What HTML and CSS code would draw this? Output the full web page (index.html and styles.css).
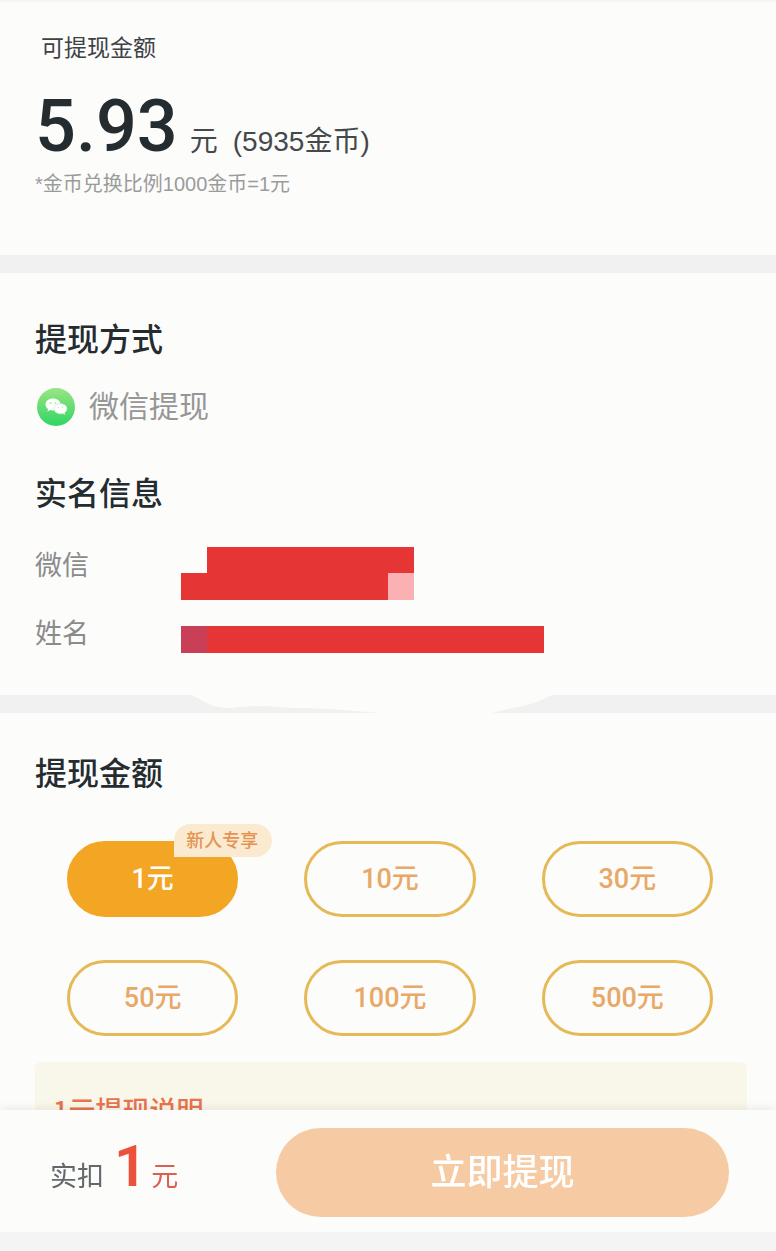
FILE: index.html
```html
<!DOCTYPE html>
<html lang="zh-CN">
<head>
  <meta charset="UTF-8">
  <meta name="viewport" content="width=device-width, initial-scale=1.0">
  <title>提现</title>
  <link rel="stylesheet" href="styles.css">
</head>
<body>
  <div class="app">
    <main class="app-main">
      <section class="balance">
        <h1 class="balance-label">可提现金额</h1>
        <p class="balance-amount">
          <strong>5.93</strong>
          <span class="balance-unit">元</span>
          <span class="balance-coins">(5935金币)</span>
        </p>
        <p class="balance-rate">*金币兑换比例1000金币=1元</p>
      </section>

      <div class="divider"></div>

      <section class="method">
        <h2>提现方式</h2>
        <div class="method-item">
          <svg class="wechat-icon" viewBox="0 0 40 40" aria-hidden="true">
            <defs>
              <linearGradient id="wechat-green" x1="0" y1="0" x2="0" y2="1">
                <stop offset="0" stop-color="#9be583"/>
                <stop offset="1" stop-color="#2fd565"/>
              </linearGradient>
            </defs>
            <circle cx="20" cy="20" r="19" fill="url(#wechat-green)"/>
            <path d="M17 11.500c-4.300 0-7.500 2.600-7.500 6 0 1.900 1 3.500 2.600 4.600l-.7 2.400 2.900-1.400c.9.300 1.800.4 2.700.4 4.200 0 7.500-2.600 7.500-6s-3.300-6-7.500-6z" fill="#fff"/>
            <path d="M24.500 16.500c-3.600 0-6.500 2.300-6.500 5.200s2.900 5.200 6.500 5.200c.8 0 1.600-.1 2.300-.3l2.400 1.200-.6-2c1.500-1 2.400-2.400 2.400-4.100 0-2.900-2.900-5.200-6.500-5.200z" fill="#fff" stroke="#a9e8ac" stroke-width=".6"/>
            <g fill="#a9e8ac">
              <circle cx="14.500" cy="16" r=".9"/>
              <circle cx="19.500" cy="16" r=".9"/>
              <circle cx="22.500" cy="20.500" r=".6"/>
              <circle cx="26.500" cy="20.500" r=".6"/>
            </g>
          </svg>
          <span>微信提现</span>
        </div>

        <h2>实名信息</h2>
        <dl class="real-name">
          <dt>微信</dt>
          <dd>
            <svg width="233" height="53" viewBox="0 0 233 53" role="img" aria-label="已隐藏">
              <path d="M26 0H233V26H207V53H0V26H26z" fill="#e63535"/>
              <path d="M207 26H233V53H207z" fill="#fbb0b3"/>
            </svg>
          </dd>
          <dt>姓名</dt>
          <dd>
            <svg width="363" height="27" viewBox="0 0 363 27" role="img" aria-label="已隐藏">
              <path d="M0 0H363V27H0z" fill="#e63535"/>
              <path d="M0 0H26V27H0z" fill="#c93f58"/>
            </svg>
          </dd>
        </dl>
      </section>

      <div class="divider">
        <svg class="divider-patch" width="360" height="18" viewBox="0 0 360 18" aria-hidden="true">
          <path d="M0 0C12 6 18 13 40 13C60 10 80 11 98 13C130 13 150 15 190 18H300C325 11 335 13 360 0z"/>
        </svg>
      </div>

      <section class="amount">
        <h2>提现金额</h2>
        <div class="amount-grid">
          <button type="button" class="amount-btn active">1元<span class="badge">新人专享</span></button>
          <button type="button" class="amount-btn">10元</button>
          <button type="button" class="amount-btn">30元</button>
          <button type="button" class="amount-btn">50元</button>
          <button type="button" class="amount-btn">100元</button>
          <button type="button" class="amount-btn">500元</button>
        </div>
        <div class="notice">
          <h3>1元提现说明</h3>
        </div>
      </section>
    </main>

    <footer class="pay-bar">
      <p class="pay-total">实扣 <strong>1</strong> <span>元</span></p>
      <button type="button" class="submit-btn">立即提现</button>
    </footer>
  </div>
</body>
</html>
```
FILE: styles.css
```css
* {
  margin: 0;
  padding: 0;
  box-sizing: border-box;
}

body {
  background-color: #f4f4f4;
  color: #252c30;
  font-family: "Liberation Sans", "Noto Sans CJK SC", sans-serif;
}

button {
  font-family: inherit;
  cursor: pointer;
}

.app {
  display: flex;
  flex-direction: column;
  height: 100vh;
  padding: 2px 0 19px;
}

.app-main {
  flex: 1;
  min-height: 0;
  overflow-y: auto;
  scrollbar-width: none;
  background-color: #fcfcfb;
}

h2 {
  font-size: 32px;
  line-height: 48px;
  font-weight: 500;
  font-family: "Noto Sans CJK SC", sans-serif;
}

/* 余额 */
.balance {
  padding: 30px 35px 56px;
}

.balance-label {
  padding-left: 6px;
  color: #3d4245;
  font-size: 23px;
  line-height: 32px;
  font-weight: 400;
}

.balance-amount {
  display: flex;
  align-items: baseline;
  height: 88px;
  margin-top: 17px;
  color: #44494c;
  font-size: 28px;
  line-height: 92px;
}

.balance-amount strong {
  color: #252c30;
  font-family: Roboto, sans-serif;
  font-size: 72px;
  font-weight: 500;
}

.balance-unit {
  margin-left: 12px;
}

.balance-coins {
  margin-left: 15px;
}

.balance-rate {
  color: #9b9b9b;
  font-size: 20px;
  line-height: 30px;
}

.divider {
  height: 18px;
  background-color: #f1f1f1;
}

.divider-patch {
  display: block;
  margin-left: 192px;
  fill: #fcfcfb;
}

/* 提现方式 */
.method {
  padding: 40px 35px 42px;
}

.method-item {
  display: flex;
  align-items: center;
  gap: 13px;
  margin: 22px 0 36px;
  padding-left: 1px;
  color: #969696;
  font-size: 30px;
  line-height: 48px;
}

.wechat-icon {
  width: 40px;
  height: 40px;
}

.real-name {
  display: grid;
  grid-template-columns: 146px 1fr;
  row-gap: 15px;
  margin-top: 32px;
  color: #8b8b8b;
  font-size: 27px;
  line-height: 38px;
}

.real-name dd {
  align-self: end;
}

.real-name svg {
  display: block;
}

/* 提现金额 */
.amount {
  padding: 34px 29px 40px 35px;
}

.amount-grid {
  display: grid;
  grid-template-columns: repeat(3, 1fr);
  gap: 43px 66px;
  margin: 46px 34px 26px 32px;
}

.amount-btn {
  position: relative;
  height: 76px;
  padding-bottom: 6px;
  border: 3px solid #e6b957;
  border-radius: 38px;
  background-color: transparent;
  color: #e8a868;
  font-size: 27px;
  font-weight: 500;
  font-family: Roboto, "Noto Sans CJK SC", sans-serif;
}

.amount-btn.active {
  border-color: #f3a524;
  background-color: #f3a524;
  color: #fff;
}

.badge {
  position: absolute;
  top: -20px;
  right: -37px;
  padding: 0 14px 0 12px;
  border-radius: 17px 17px 17px 0;
  background-color: #faead0;
  color: #e59353;
  font-size: 18px;
  line-height: 33px;
  white-space: nowrap;
}

.notice {
  padding: 28px 18px;
  border-radius: 6px;
  background-color: #f9f6ea;
}

.notice h3 {
  color: #e8734f;
  font-family: "Noto Sans CJK SC", sans-serif;
  font-size: 27px;
  line-height: 40px;
  font-weight: 500;
}

/* 底部操作栏 */
.pay-bar {
  position: relative;
  display: flex;
  align-items: center;
  padding: 18px 47px 15px 50px;
  background-color: #fcfcfb;
  box-shadow: 0 -5px 6px -1px rgba(0, 0, 0, 0.05);
}

.pay-total {
  display: flex;
  align-items: baseline;
  width: 226px;
  padding-bottom: 13px;
  color: #62686b;
  font-size: 27px;
}

.pay-total strong {
  margin: 0 4px 0 10px;
  color: #ed513c;
  font-family: Roboto, sans-serif;
  font-size: 58px;
  font-weight: 600;
}

.pay-total span {
  color: #dc6052;
}

.submit-btn {
  flex: 1;
  height: 89px;
  padding-bottom: 8px;
  border: none;
  border-radius: 45px;
  background-color: #f6cba4;
  color: #fff;
  font-family: "Noto Sans CJK SC", sans-serif;
  font-size: 36px;
  font-weight: 500;
}
```
